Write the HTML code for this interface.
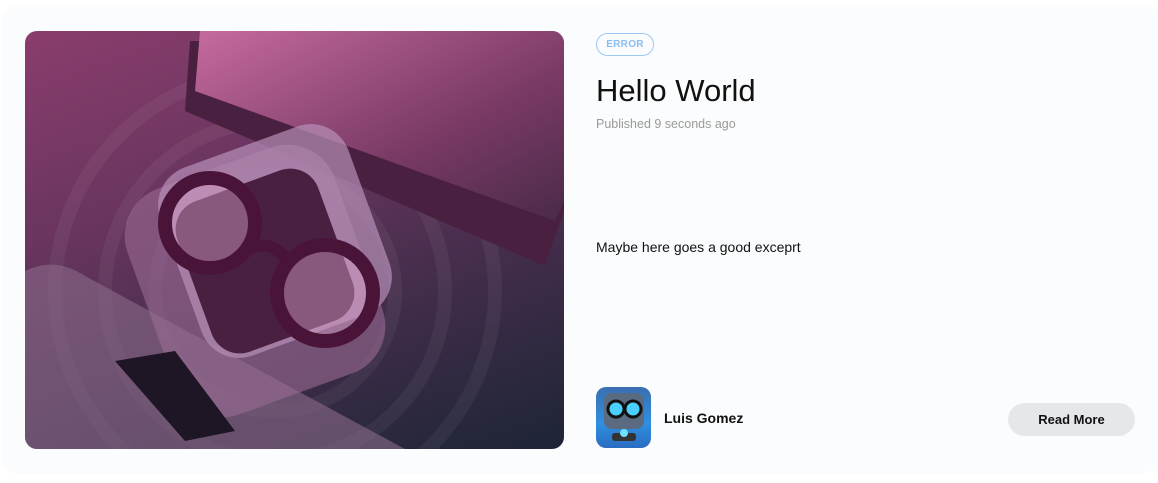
<!DOCTYPE html>
<html><head><style>
html,body{margin:0;width:1158px;height:483px;overflow:hidden}
body{background:#fff;font-family:"Liberation Sans",sans-serif;position:relative}
.card{position:absolute;left:3px;top:5px;width:1152px;height:469px;background:#fbfcfd;border-radius:14px}
.img{position:absolute;left:25px;top:31px;width:539px;height:418px;border-radius:12px;overflow:hidden;background:linear-gradient(160deg,#8a3d6d 0%,#6a3560 35%,#3d2c48 70%,#1d2535 100%)}
.tag{position:absolute;left:596px;top:33px;width:56px;height:21px;border:1px solid #9ec8f4;border-radius:12px;color:#8cbcf0;font-size:10px;font-weight:bold;text-align:center;line-height:22px;letter-spacing:.3px}
h1{position:absolute;left:596px;top:73px;margin:0;font-weight:normal;font-size:31px;color:#111}
.pub{position:absolute;left:596px;top:117px;font-size:12.5px;color:#9a9a9a}
.ex{position:absolute;left:596px;top:239px;font-size:14px;color:#111}
.av{position:absolute;left:596px;top:387px;width:55px;height:61px;border-radius:10px;background:linear-gradient(180deg,#3a6fb0,#2f8fe0 60%,#2a6cc0)}
.name{position:absolute;left:664px;top:410px;font-size:14px;font-weight:bold;color:#111}
.btn{position:absolute;left:1008px;top:403px;width:127px;height:33px;border-radius:17px;background:#e6e7eb;font-size:13px;font-weight:bold;text-align:center;line-height:33px;color:#111}
</style></head><body>
<div class="card"></div>
<div class="img">
<svg width="539" height="418" viewBox="0 0 539 418">
<defs><linearGradient id="s" x1="0" y1="0" x2="1" y2="1"><stop offset="0" stop-color="#c56a9f"/><stop offset=".6" stop-color="#7a3a66"/><stop offset="1" stop-color="#4a2a48"/></linearGradient></defs>
<g fill="none" stroke="#ffffff" stroke-opacity=".05" stroke-width="14"><circle cx="250" cy="260" r="120"/><circle cx="250" cy="260" r="170"/><circle cx="250" cy="260" r="220"/></g>
<path d="M165 10 L539 10 L539 180 L520 235 L160 80 Z" fill="#4a2040"/>
<path d="M175 0 L539 0 L539 170 L530 190 L170 60 Z" fill="url(#s)"/>
<path d="M0 240 Q30 225 60 245 L380 418 L0 418 Z" fill="#8a6a8a" opacity=".6"/>
<rect x="120" y="130" width="220" height="240" rx="50" fill="#9a6a95" opacity=".6" transform="rotate(-20 230 250)"/>
<rect x="150" y="110" width="200" height="200" rx="40" fill="#b790b8" opacity=".7" transform="rotate(-20 250 210)"/>
<rect x="165" y="150" width="150" height="160" rx="30" fill="#4a2040" transform="rotate(-20 240 230)"/>
<g fill="#d8a0c8" fill-opacity=".45" stroke="#4a1438" stroke-width="14"><circle cx="185" cy="192" r="45"/><circle cx="300" cy="262" r="48"/></g>
<path d="M220 220 Q245 205 262 230" stroke="#4a1438" stroke-width="12" fill="none"/>
<path d="M90 330 L150 320 L210 400 L160 410 Z" fill="#1e1525"/>
</svg>
</div>
<div class="tag">ERROR</div>
<h1>Hello World</h1>
<div class="pub">Published 9 seconds ago</div>
<div class="ex">Maybe here goes a good exceprt</div>
<div class="av"><svg width="55" height="61"><rect x="8" y="6" width="40" height="36" rx="8" fill="#5a6a80"/><circle cx="20" cy="22" r="8" fill="#4ad0ff" stroke="#111" stroke-width="3"/><circle cx="37" cy="22" r="8" fill="#4ad0ff" stroke="#111" stroke-width="3"/><rect x="16" y="46" width="24" height="8" rx="3" fill="#333"/><circle cx="28" cy="46" r="4" fill="#6fe0ff"/></svg></div>
<div class="name">Luis Gomez</div>
<div class="btn">Read More</div>
</body></html>
